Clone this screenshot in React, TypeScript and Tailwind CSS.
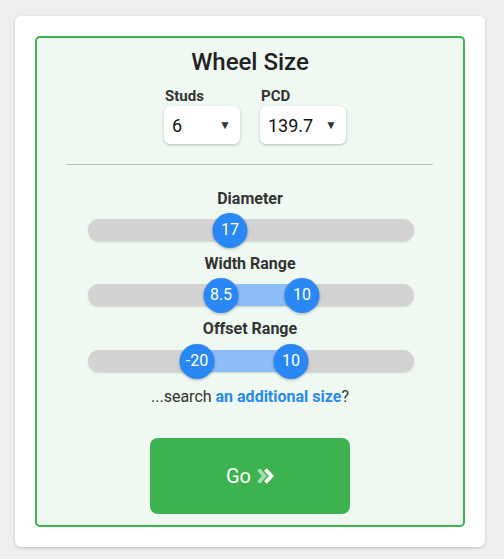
import { useState } from 'react'

type Thumb = { left: number; label: string }

function Slider({ thumbs }: { thumbs: Thumb[] }) {
  const range = thumbs.length === 2
  return (
    <div className="relative ml-[51px] h-[36px] w-[326px]">
      <div className="absolute left-0 right-0 top-[7px] h-[22px] rounded-full bg-[#d3d3d3] shadow-[0_1px_2px_rgba(0,0,0,0.15)]" />
      {range && (
        <div
          className="absolute top-[7px] h-[22px] bg-[#8cbdf8]"
          style={{ left: thumbs[0].left, width: thumbs[1].left - thumbs[0].left }}
        />
      )}
      {thumbs.map((t) => (
        <div
          key={t.label}
          className="absolute top-[0.5px] flex h-[35px] w-[35px] -translate-x-1/2 items-center justify-center rounded-full bg-[#2a88f6] text-[16px] text-white shadow-[0_1px_3px_rgba(0,0,0,0.3)]"
          style={{ left: t.left }}
        >
          {t.label}
        </div>
      ))}
    </div>
  )
}

function Select({ label, value, width }: { label: string; value: string; width: string }) {
  return (
    <div className="flex flex-col">
      <span className="pl-[1px] text-[15px] font-bold leading-[18px] text-[#333]">{label}</span>
      <div
        className={`mt-[1px] flex h-[38px] items-center justify-between rounded-[6px] bg-white pl-[8px] pr-[9px] shadow-[0_1px_3px_rgba(0,0,0,0.25)] ${width}`}
      >
        <span className="text-[18px] text-[#111]">{value}</span>
        <span className="text-[12px] text-[#333]">▼</span>
      </div>
    </div>
  )
}

export default function App() {
  const [studs] = useState('6')
  const [pcd] = useState('139.7')

  return (
    <div className="min-h-[559px] bg-[#eeeeee] pl-[15px] pt-[16px] font-['Roboto',sans-serif]">
      <div className="w-[470px] rounded-[6px] bg-white p-[20px] shadow-[0_1px_3px_rgba(0,0,0,0.2)]">
        <div className="flex flex-col rounded-[5px] border-2 border-[#3cb34f] bg-[#eff9f1] pb-[11px] pt-[10px]">
          <h1 className="text-center text-[24px] font-medium leading-[28px] text-[#222]">Wheel Size</h1>

          <div className="mt-[11px] flex justify-center gap-[20px] pl-[10px]">
            <Select label="Studs" value={studs} width="w-[76px]" />
            <Select label="PCD" value={pcd} width="w-[86px]" />
          </div>

          <div className="mx-[30px] mt-[20px] h-px bg-[#a9cfb0]" />

          <div className="mt-[25px] text-center text-[16px] font-bold leading-[18px] text-[#333]">Diameter</div>
          <div className="mt-[4px]">
            <Slider thumbs={[{ left: 142, label: '17' }]} />
          </div>

          <div className="mt-[7px] text-center text-[16px] font-bold leading-[18px] text-[#333]">Width Range</div>
          <div className="mt-[4px]">
            <Slider
              thumbs={[
                { left: 133, label: '8.5' },
                { left: 214, label: '10' },
              ]}
            />
          </div>

          <div className="mt-[7px] text-center text-[16px] font-bold leading-[18px] text-[#333]">Offset Range</div>
          <div className="mt-[5px]">
            <Slider
              thumbs={[
                { left: 109, label: '-20' },
                { left: 203, label: '10' },
              ]}
            />
          </div>

          <p className="mt-[8px] text-center text-[16px] leading-[20px] text-[#333]">
            ...search <a className="font-bold text-[#2a88f6]">an additional size</a>?
          </p>

          <button className="mx-auto mt-[31px] flex h-[76px] w-[200px] items-center justify-center gap-[5px] rounded-[8px] bg-[#3cb34f] text-[20px] text-white">
            <span>Go</span>
            <svg width="18" height="18" viewBox="0 0 18 18">
              <path d="M2.5 2.5 L8.5 9 L2.5 15.5" fill="none" stroke="#a3dcab" strokeWidth="3.8" strokeLinejoin="miter" />
              <path d="M9.5 2.5 L15.5 9 L9.5 15.5" fill="none" stroke="#ffffff" strokeWidth="3.8" strokeLinejoin="miter" />
            </svg>
          </button>
        </div>
      </div>
    </div>
  )
}
